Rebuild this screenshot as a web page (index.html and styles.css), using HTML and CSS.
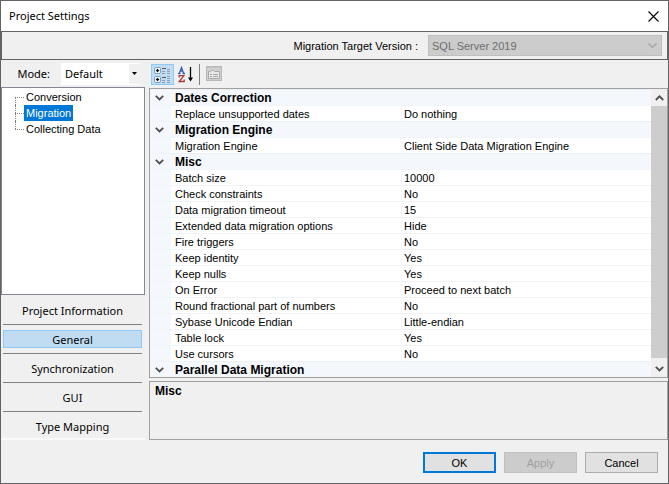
FILE: index.html
```html
<!DOCTYPE html>
<html lang="en">
<head>
<meta charset="utf-8">
<title>Project Settings</title>
<link rel="stylesheet" href="styles.css">
</head>
<body>
<div class="dialog">
  <header class="titlebar">
    <h1 class="title">Project Settings</h1>
    <button class="close" type="button" aria-label="Close">
      <svg width="11" height="11" viewBox="0 0 11 11"><path d="M.5 .5l10 10M10.500 .5l-10 10" fill="none" stroke="#000" stroke-width="1.100"/></svg>
    </button>
  </header>

  <div class="target">
    <label for="target-version">Migration Target Version :</label>
    <div class="combo combo-target">
      <select id="target-version" disabled><option>SQL Server 2019</option></select>
      <svg class="combo-arrow" width="9" height="6" viewBox="0 0 9 6"><path d="M.5 .5l4 4 4-4" fill="none" stroke="#a0a0a0" stroke-width="1.200"/></svg>
    </div>
  </div>

  <main class="content">
    <aside class="sidebar">
      <div class="mode">
        <label for="mode">Mode:</label>
        <div class="combo combo-mode">
          <select id="mode"><option>Default</option></select>
          <span class="combo-drop"><svg width="5" height="3" viewBox="0 0 5 3"><path d="M0 0h5L2.500 3z" fill="#000"/></svg></span>
        </div>
      </div>
      <ul class="tree">
        <li><a href="#conversion">Conversion</a></li>
        <li><a href="#migration" class="selected">Migration</a></li>
        <li><a href="#collecting">Collecting Data</a></li>
      </ul>
      <nav class="nav">
        <div class="nav-item"><button type="button">Project Information</button></div>
        <div class="nav-item"><button type="button" class="active">General</button></div>
        <div class="nav-item"><button type="button">Synchronization</button></div>
        <div class="nav-item"><button type="button">GUI</button></div>
        <div class="nav-item"><button type="button">Type Mapping</button></div>
      </nav>
    </aside>

    <section class="properties">
      <div class="toolbar">
        <button type="button" class="tool pressed" aria-label="Categorized">
          <svg width="17" height="17" viewBox="0 0 17 17">
            <rect x=".5" y="1.500" width="6" height="6" rx="1.500" fill="#fff" stroke="#7f9fc4"/>
            <rect x=".5" y="10.500" width="6" height="6" rx="1.500" fill="#fff" stroke="#7f9fc4"/>
            <path d="M2 4h3v1H2zM3 3h1v3H3zM2 13h3v1H2zM3 12h1v3H3z" fill="#111" stroke="#111" stroke-width=".3"/>
            <path d="M8 2h4v1H8zM8 11h4v1H8z" fill="#555"/>
            <path d="M8 5h3v1H8zM8 7h3v1H8zM8 14h3v1H8zM8 16h3v1H8zM13 3h3v1h-3zM13 5h3v1h-3zM13 7h3v1h-3zM13 10h3v1h-3zM13 12h3v1h-3zM13 14h3v1h-3zM13 16h3v1h-3z" fill="#8aa0b8"/>
          </svg>
        </button>
        <button type="button" class="tool" aria-label="Alphabetical">
          <svg width="16" height="17" viewBox="0 0 16 17">
            <path d="M1.500 7L3.500 1.500 5.500 7M2.300 5h2.500M0 7.500h2.500M4.500 7.500H7" fill="none" stroke="#3b5fc0" stroke-width="1.300"/>
            <path d="M1.200 11.500V9.600h4.600L1.200 15.500h5V13.500" fill="none" stroke="#a83a3a" stroke-width="1.300"/>
            <path d="M12.500 1v13" stroke="#000" stroke-width="1.300"/>
            <path d="M10 11.500h5l-2.500 4z" fill="#000"/>
          </svg>
        </button>
        <span class="divider"></span>
        <button type="button" class="tool" disabled aria-label="Property Pages">
          <svg width="16" height="16" viewBox="0 0 16 16">
            <rect x=".5" y=".5" width="15" height="14" fill="#d0d0d0" stroke="#b8b8b8"/>
            <path d="M1 1.500h14" stroke="#c4c4c4"/>
            <path d="M2.500 12.500v-7h2l1-1h2l1 1h5v7z" fill="#e8e8e8" stroke="#a8a8a8"/>
            <path d="M4 8.500h2M7 8.500h5M4 10.500h2M7 10.500h5" stroke="#a8a8a8"/>
          </svg>
        </button>
      </div>

      <div class="grid">
        <div class="grid-view">
          <table>
            <colgroup><col class="col-gutter"><col class="col-name"><col></colgroup>
            <tbody>
              <tr class="category"><td><svg class="chevron" viewBox="0 0 9 6"><path d="M.8 .8l3.700 3.700 3.700-3.700"/></svg></td><th colspan="2">Dates Correction</th></tr>
              <tr><td></td><th>Replace unsupported dates</th><td>Do nothing</td></tr>
              <tr class="category"><td><svg class="chevron" viewBox="0 0 9 6"><path d="M.8 .8l3.700 3.700 3.700-3.700"/></svg></td><th colspan="2">Migration Engine</th></tr>
              <tr><td></td><th>Migration Engine</th><td>Client Side Data Migration Engine</td></tr>
              <tr class="category"><td><svg class="chevron" viewBox="0 0 9 6"><path d="M.8 .8l3.700 3.700 3.700-3.700"/></svg></td><th colspan="2">Misc</th></tr>
              <tr><td></td><th>Batch size</th><td>10000</td></tr>
              <tr><td></td><th>Check constraints</th><td>No</td></tr>
              <tr><td></td><th>Data migration timeout</th><td>15</td></tr>
              <tr><td></td><th>Extended data migration options</th><td>Hide</td></tr>
              <tr><td></td><th>Fire triggers</th><td>No</td></tr>
              <tr><td></td><th>Keep identity</th><td>Yes</td></tr>
              <tr><td></td><th>Keep nulls</th><td>Yes</td></tr>
              <tr><td></td><th>On Error</th><td>Proceed to next batch</td></tr>
              <tr><td></td><th>Round fractional part of numbers</th><td>No</td></tr>
              <tr><td></td><th>Sybase Unicode Endian</th><td>Little-endian</td></tr>
              <tr><td></td><th>Table lock</th><td>Yes</td></tr>
              <tr><td></td><th>Use cursors</th><td>No</td></tr>
              <tr class="category"><td><svg class="chevron" viewBox="0 0 9 6"><path d="M.8 .8l3.700 3.700 3.700-3.700"/></svg></td><th colspan="2">Parallel Data Migration</th></tr>
            </tbody>
          </table>
        </div>
        <div class="scrollbar">
          <button type="button" aria-label="Scroll up"><svg class="chevron" viewBox="0 0 9 6"><path d="M.8 5l3.700-3.700L8.200 5"/></svg></button>
          <div class="thumb"></div>
          <button type="button" aria-label="Scroll down"><svg class="chevron" viewBox="0 0 9 6"><path d="M.8 .8l3.700 3.700 3.700-3.700"/></svg></button>
        </div>
      </div>

      <div class="description"><h2>Misc</h2></div>
    </section>
  </main>

  <footer class="actions">
    <button type="button" class="default">OK</button>
    <button type="button" disabled>Apply</button>
    <button type="button">Cancel</button>
  </footer>
</div>
</body>
</html>
```
FILE: styles.css
```css
* { box-sizing: border-box; }

body {
  margin: 0;
  font: 11px/16px "Liberation Sans", Arial, sans-serif;
  color: #000;
}

button, select { font: inherit; color: inherit; margin: 0; }
button { padding: 0; border: 0; background: none; }
svg { display: block; }
h1, h2 { margin: 0; }

.dialog {
  display: flex;
  flex-direction: column;
  min-height: 100vh;
  border: 1px solid #636365;
  background: #f0f0f0;
}

.titlebar {
  display: flex;
  align-items: center;
  justify-content: space-between;
  height: 30px;
  padding: 0 9px 0 8px;
  background: #fff;
}
.title, .mode, .nav button { font: 11px/16px "Noto Sans", sans-serif; }

.target {
  display: flex;
  align-items: center;
  justify-content: flex-end;
  gap: 10px;
  height: 29px;
  padding-right: 5px;
  border: 1px solid #636365;
}

.combo { position: relative; display: flex; }
.combo select {
  appearance: none;
  width: 100%;
  border: 0;
  border-radius: 0;
  background: #fff;
  padding: 0 4px;
  opacity: 1;
}
.combo-target { width: 234px; height: 21px; }
.combo-target select { border: 1px solid #bfbfbf; background: #ccc; color: #6d6d6d; padding: 0 3px; }
.combo-arrow { position: absolute; right: 5px; top: 8px; }

.content { display: flex; flex: 1; gap: 4px; min-height: 0; }

.sidebar { display: flex; flex-direction: column; flex: none; width: 144px; }
.mode {
  display: flex;
  align-items: center;
  justify-content: flex-end;
  gap: 11px;
  height: 27px;
  padding-right: 5px;
}
.combo-mode { width: 79px; height: 22px; }
.combo-drop {
  position: absolute;
  right: 0;
  top: 1px;
  bottom: 1px;
  width: 11px;
  display: grid;
  place-items: center;
  background: #f0f0f0;
  pointer-events: none;
}

.tree {
  flex: 1;
  margin: 0 0 1px;
  padding: 1px 0 0 13px;
  border: 1px solid #828790;
  background: #fff;
  list-style: none;
}
.tree li { position: relative; height: 16px; padding-left: 9px; }
.tree li::before {
  content: "";
  position: absolute;
  left: 0;
  top: 0;
  height: 16px;
  border-left: 1px dotted #808080;
}
.tree li:first-child::before { top: 8px; height: 8px; }
.tree li:last-child::before { height: 8px; }
.tree li::after {
  content: "";
  position: absolute;
  left: 0;
  top: 8px;
  width: 9px;
  border-top: 1px dotted #808080;
}
.tree a { display: inline-block; height: 16px; padding: 0 2px; color: #000; text-decoration: none; }
.tree a.selected { background: #0078d7; color: #fff; }

.nav { border-bottom: 2px solid #fafafa; }
.nav-item { margin: 0 3px 0 2px; padding: 5px 0; border-bottom: 1px solid #808080; }
.nav-item:last-child { border-bottom: 0; padding-bottom: 3px; }
.nav-item button {
  display: block;
  width: 100%;
  height: 18px;
  padding-top: 1px;
  border: 1px solid transparent;
}
.nav-item button.active { background: #c0dcf3; border-color: #90c8f6; }

.properties { display: flex; flex-direction: column; flex: 1; min-width: 0; }
.toolbar { display: flex; align-items: center; height: 28px; padding: 0 2px; }
.tool { display: grid; place-items: center; width: 23px; height: 21px; }
.tool.pressed { background: #c0dcf3; border: 1px solid #90c8f6; }
.divider { width: 1px; height: 21px; margin: 0 2px; background: #808080; }

.grid { display: flex; flex: 1; border: 1px solid #a0a0a0; background: #fff; min-height: 0; }
.grid-view { flex: 1; overflow: hidden; }
table { width: 100%; border-collapse: separate; border-spacing: 0; table-layout: fixed; }
.col-gutter { width: 21px; }
.col-name { width: 230px; }
th, td {
  height: 16px;
  padding: 1px 0 0 4px;
  border-top: 1px solid #f0f4f9;
  line-height: 14px;
  font-weight: normal;
  text-align: left;
  white-space: nowrap;
}
td:last-child { border-left: 1px solid #f4f7fc; padding-left: 2px; }
td:first-child { background: #f4f7fc; padding: 0; }
.category th { background: #f4f7fc; border-top-color: #eceff3; font-weight: bold; font-size: 12px; }
.chevron { width: 9px; height: 6px; margin: 0 auto; fill: none; stroke: #505050; stroke-width: 1.800; }
.category td .chevron { margin-left: 5px; }

.scrollbar { display: flex; flex-direction: column; width: 16px; background: #f0f0f0; }
.scrollbar button { height: 17px; flex: none; }
.thumb { flex: 1; margin-bottom: 2px; background: #cdcdcd; }

.description { height: 59px; margin-top: 3px; padding: 1px 5px; border: 1px solid #a0a0a0; }
.description h2 { font-size: 12px; line-height: 16px; }

.actions { display: flex; justify-content: flex-end; gap: 8px; padding: 12px 10px 10px; }
.actions button { width: 73px; height: 21px; border: 1px solid #adadad; background: #e1e1e1; }
.actions .default { border: 2px solid #0078d7; }
.actions button:disabled { background: #ccc; border-color: #bfbfbf; color: #a0a0a0; }
```
